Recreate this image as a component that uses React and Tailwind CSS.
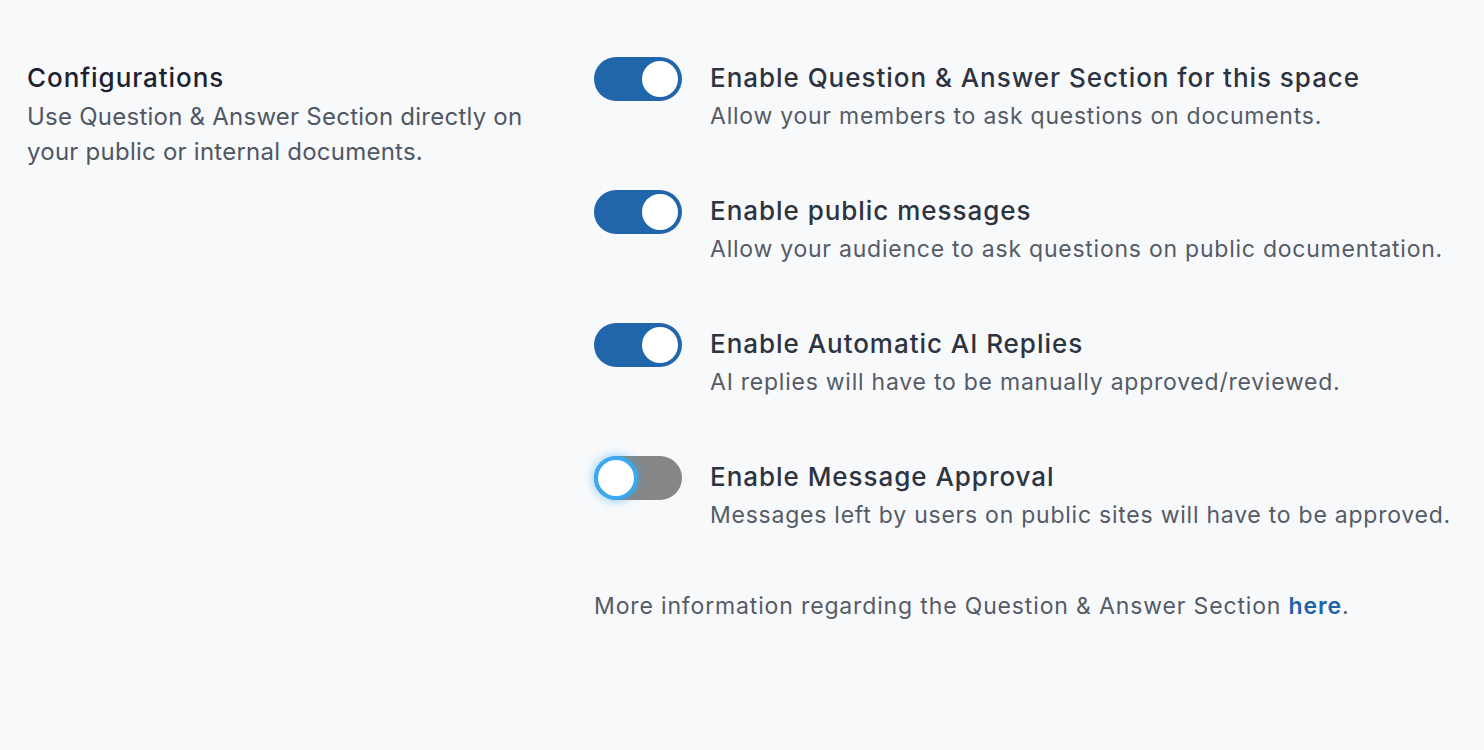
import React, { useState } from 'react';

const settings = [
  {
    id: 'qa',
    title: 'Enable Question & Answer Section for this space',
    description: 'Allow your members to ask questions on documents.',
    on: true,
  },
  {
    id: 'public',
    title: 'Enable public messages',
    description: 'Allow your audience to ask questions on public documentation.',
    on: true,
  },
  {
    id: 'ai',
    title: 'Enable Automatic AI Replies',
    description: 'AI replies will have to be manually approved/reviewed.',
    on: true,
  },
  {
    id: 'approval',
    title: 'Enable Message Approval',
    description: 'Messages left by users on public sites will have to be approved.',
    on: false,
    focused: true,
  },
];

const Toggle = ({ checked, focused, onChange }) => (
  <button
    type="button"
    role="switch"
    aria-checked={checked}
    onClick={onChange}
    className={`relative flex h-[44px] w-[88px] shrink-0 items-center rounded-full px-[4px] ${
      checked ? 'bg-[#2165ab] justify-end' : 'bg-[#878787] justify-start'
    }`}
  >
    <span
      className={`block h-[36px] w-[36px] rounded-full bg-white ${
        focused ? 'ring-[4px] ring-[#3aa9f0] shadow-[0_0_10px_5px_rgba(58,169,240,0.55)]' : ''
      }`}
    />
  </button>
);

export default function App() {
  const [state, setState] = useState(settings);

  const flip = (id) =>
    setState((prev) => prev.map((s) => (s.id === id ? { ...s, on: !s.on } : s)));

  return (
    <div
      className="min-h-[750px] w-full bg-[#f8f9fb] text-[#2d3340]"
      style={{ fontFamily: 'Inter, "Noto Sans", sans-serif' }}
    >
      <div className="flex pt-[57px]">
        {/* Left description */}
        <div className="w-[594px] shrink-0 pl-[27px] pr-[40px]">
          <h2 className="mt-[1px] text-[26px] leading-[40px] font-medium tracking-[0.036em] text-[#1c2230]">
            Configurations
          </h2>
          <p className="mt-[1px] w-[510px] text-[24px] leading-[35px] tracking-[0.01em] text-[#505763]">
            Use Question &amp; Answer Section directly on your public or internal documents.
          </p>
        </div>

        {/* Right settings */}
        <div className="flex flex-col">
          <div className="flex flex-col gap-[56px]">
            {state.map((s) => (
              <div key={s.id} className="flex items-start gap-[28px]">
                <Toggle checked={s.on} focused={s.focused} onChange={() => flip(s.id)} />
                <div className="-mt-[1px]">
                  <div className="text-[26px] leading-[44px] font-medium tracking-[0.037em] text-[#2d3340]">
                    {s.title}
                  </div>
                  <div className="-mt-[2px] text-[23px] leading-[36px] tracking-[0.033em] text-[#555b66]">
                    {s.description}
                  </div>
                </div>
              </div>
            ))}
          </div>
          <p className="mt-[55px] text-[23px] leading-[36px] tracking-[0.037em] text-[#555b66]">
            More information regarding the Question &amp; Answer Section{' '}
            <a href="#" className="font-semibold text-[#1f63a8]">here</a>.
          </p>
        </div>
      </div>
    </div>
  );
}
